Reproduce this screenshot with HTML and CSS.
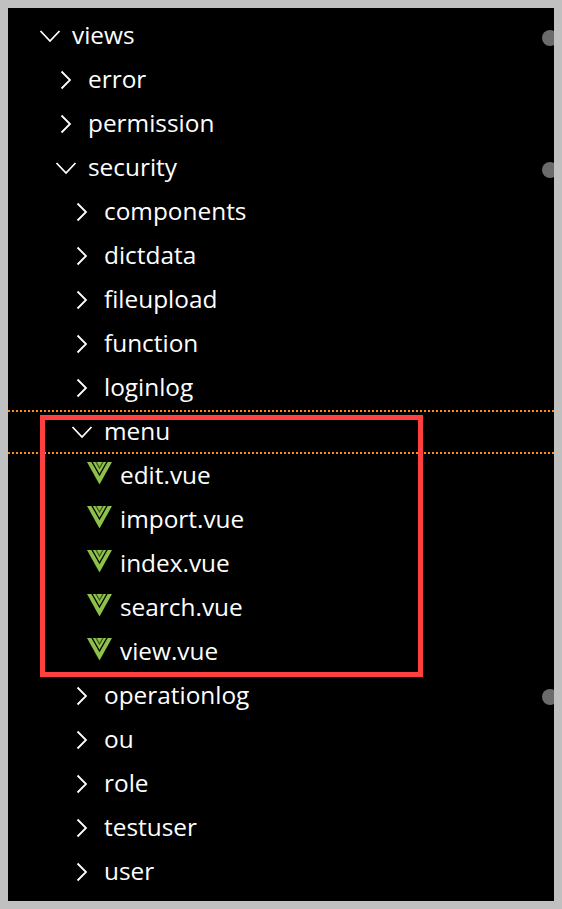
FILE: index.html
```html
<!DOCTYPE html>
<html lang="en">

<head>
    <meta charset="UTF-8">
    <meta name="viewport" content="width=device-width, initial-scale=1.0">
    <title>views tree</title>
    <link rel="stylesheet" href="styles.css">
</head>

<body>
    <svg class="defs" width="0" height="0">
        <symbol id="open" viewBox="0 0 32 32"><path d="M6.500 11 16 21 25.500 11" /></symbol>
        <symbol id="closed" viewBox="0 0 32 32"><path d="M11.500 7.500 20 16 11.500 24.500" /></symbol>
        <symbol id="vue" viewBox="0 0 26 23">
            <polygon class="vue-fill" points="0,0 25,0 12.500,22.500" />
            <polyline class="vue-cut" points="4.500,-1 12.500,13 20.500,-1" />
            <polyline class="vue-cut vue-cut-inner" points="8.500,-1 12.500,6 16.500,-1" />
        </symbol>
    </svg>

    <div class="tree">
        <div class="row depth-0"><svg class="icon"><use href="#open" /></svg><span>views</span></div>
        <div class="row depth-1"><svg class="icon"><use href="#closed" /></svg><span>error</span></div>
        <div class="row depth-1"><svg class="icon"><use href="#closed" /></svg><span>permission</span></div>
        <div class="row depth-1"><svg class="icon"><use href="#open" /></svg><span>security</span></div>
        <div class="row depth-2"><svg class="icon"><use href="#closed" /></svg><span>components</span></div>
        <div class="row depth-2"><svg class="icon"><use href="#closed" /></svg><span>dictdata</span></div>
        <div class="row depth-2"><svg class="icon"><use href="#closed" /></svg><span>fileupload</span></div>
        <div class="row depth-2"><svg class="icon"><use href="#closed" /></svg><span>function</span></div>
        <div class="row depth-2"><svg class="icon"><use href="#closed" /></svg><span>loginlog</span></div>
        <div class="row depth-2"><svg class="icon"><use href="#open" /></svg><span>menu</span></div>
        <div class="row depth-3"><svg class="file-icon"><use href="#vue" /></svg><span>edit.vue</span></div>
        <div class="row depth-3"><svg class="file-icon"><use href="#vue" /></svg><span>import.vue</span></div>
        <div class="row depth-3"><svg class="file-icon"><use href="#vue" /></svg><span>index.vue</span></div>
        <div class="row depth-3"><svg class="file-icon"><use href="#vue" /></svg><span>search.vue</span></div>
        <div class="row depth-3"><svg class="file-icon"><use href="#vue" /></svg><span>view.vue</span></div>
        <div class="row depth-2"><svg class="icon"><use href="#closed" /></svg><span>operationlog</span></div>
        <div class="row depth-2"><svg class="icon"><use href="#closed" /></svg><span>ou</span></div>
        <div class="row depth-2"><svg class="icon"><use href="#closed" /></svg><span>role</span></div>
        <div class="row depth-2"><svg class="icon"><use href="#closed" /></svg><span>testuser</span></div>
        <div class="row depth-2"><svg class="icon"><use href="#closed" /></svg><span>user</span></div>

        <!-- marks drawn over the tree -->
        <div class="guide guide-top"></div>
        <div class="guide guide-bottom"></div>
        <div class="highlight"></div>
        <div class="dot dot-views"></div>
        <div class="dot dot-security"></div>
        <div class="dot dot-operationlog"></div>
    </div>
</body>

</html>
```

FILE: styles.css
```css
* {
    box-sizing: border-box;
}

body {
    margin: 0;
    padding: 8px;
    height: 909px;
    overflow: hidden;
    background-color: #c0c0c0;
}

.defs {
    position: absolute;
}

.tree {
    position: relative;
    height: 893px;
    padding-top: 6px;
    overflow: hidden;
    background-color: #000;
    color: #fff;
    font-family: "Open Sans", "Noto Sans", sans-serif;
    font-size: 24.4px;
}

.row {
    display: flex;
    align-items: center;
    height: 44px;
}

.row span {
    padding-bottom: 4px; /* sobe o texto em relacao ao icone */
}

.depth-0 { padding-left: 26px; }
.depth-1 { padding-left: 42px; }
.depth-2 { padding-left: 58px; }
.depth-3 { padding-left: 74px; }

.icon {
    flex: 0 0 auto;
    width: 32px;
    height: 32px;
    margin-right: 6px;
    fill: none;
    stroke: #fff;
    stroke-width: 1.800;
}

.file-icon {
    flex: 0 0 auto;
    width: 26px;
    height: 23px;
    margin: -6px 7px 0 5px;
}

.vue-fill {
    fill: #8dc149;
}

.vue-cut {
    fill: none;
    stroke: #000;
    stroke-width: 1.300;
}

.vue-cut-inner {
    stroke: #3d5a1c;
}

.guide {
    position: absolute;
    left: 0;
    right: 0;
    height: 2px;
    background-image: repeating-linear-gradient(to right, #ff8c1a 0 2px, transparent 2px 4px);
}

.guide-top { top: 402px; }
.guide-bottom { top: 444px; }

.highlight {
    position: absolute;
    left: 32px;
    top: 407px;
    width: 383px;
    height: 262px;
    border: 5px solid #ff4040;
}

.dot {
    position: absolute;
    left: 534px;
    width: 16px;
    height: 16px;
    border-radius: 50%;
    background-color: #6b6b6b;
}

.dot-views { top: 22px; }
.dot-security { top: 154px; }
.dot-operationlog { top: 681px; }
```
